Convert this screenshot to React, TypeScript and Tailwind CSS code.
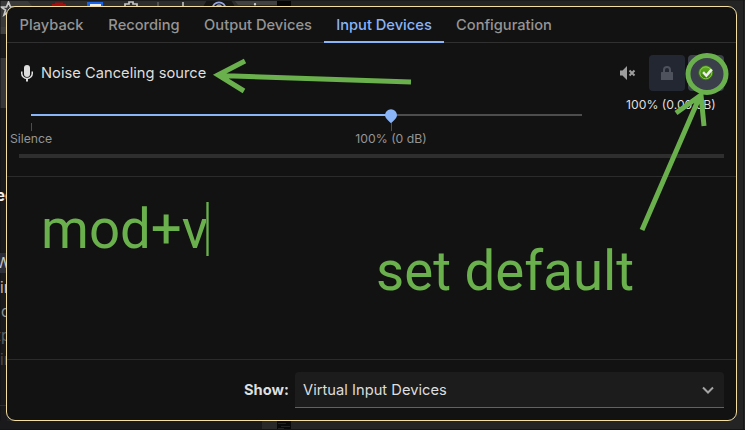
import React from "react";

const tabs = [
  { label: "Playback", width: "w-[89px]" },
  { label: "Recording", width: "w-24" },
  { label: "Output Devices", width: "w-[132px]" },
  { label: "Input Devices", width: "w-[120px]", active: true },
  { label: "Configuration", width: "w-[120px]" },
];

function Desktop() {
  return (
    <svg className="absolute inset-0" width="745" height="430" viewBox="0 0 745 430">
      <rect width="745" height="430" fill="#242424" />
      <rect width="250" height="27" fill="#2d2d2e" />
      <path d="M0 0H27L33 7V27H0Z" fill="#3a3a3a" />
      <rect y="27" width="7" height="7" fill="#414141" />
      <rect y="34" width="7" height="396" fill="#1a1a1d" />
      <rect y="58" width="6" height="50" fill="#37373a" />
      <path d="M8.500 2L10.500 7H16L11.500 10L13 15L8.500 12L4 15L5.500 10L1 7H6.500Z" fill="none" stroke="#c8c8c8" strokeWidth="1.700" />
      <path d="M52 6V4H55V2.500H63V4H66V7H52Z" fill="#ac0b0d" />
      <path d="M87 7V2H103V7Z" fill="#1764e8" />
      <path d="M90 7V4H101V7Z" fill="#e6ebf5" />
      <path d="M125 7V4H129V2H133V4H137V7" fill="none" stroke="#c6c6c6" strokeWidth="1.700" />
      <path d="M158 2V7" stroke="#606060" strokeWidth="1.500" />
      <path d="M183 2V7" stroke="#ccc" strokeWidth="1.500" />
      <path d="M203 7L207 0H231L235 7Z" fill="#151515" />
      <circle cx="219" cy="8.800" r="6.500" fill="none" stroke="#97a5df" strokeWidth="1.700" />
      <path d="M216 7Q219 3 222 7" fill="none" stroke="#9ba6d2" strokeWidth="1.300" />
      <path d="M234 0H277V5H238Z" fill="#414141" />
      <circle cx="255" cy="4.300" r="1.200" fill="#ccc" />
      <rect x="277" width="14" height="6" fill="#050505" />
      <path d="M0 .5H745" stroke="#1c1c1c" />
      <path d="M743.500 0V430" stroke="#171717" strokeWidth="1" />
      <path d="M0 0V430" stroke="#101012" />
      <rect y="253" width="6" height="20" fill="#2b2d38" />
      <rect y="421" width="42" height="9" fill="#1a1a1d" />
      <rect x="42" y="421" width="220" height="9" fill="#1a1a1d" />
      <rect x="262" y="421" width="15" height="9" fill="#292929" />
      <rect x="277" y="421" width="14" height="9" fill="#090909" />
      <path d="M278 423.500H286M281 426.500H290M278 428.500H284" stroke="#222" />
      <path d="M0 429.500H745" stroke="#151515" />
      <path d="M0 405.500H6" stroke="#2c2c2e" />
      <g fontFamily="Inter, 'Liberation Sans', sans-serif" fontSize="15">
        <text x="-4" y="201" fill="#f0f0f0" fontWeight="700">ec</text>
        <text x="-4" y="268" fill="#c5c5ca">W</text>
        <text x="0" y="293" fill="#bcbcbc">in</text>
        <text x="1" y="317" fill="#909090">c</text>
        <text x="-4" y="341" fill="#5c5c5e">tp</text>
        <text x="0" y="365" fill="#4a4a4d">in</text>
      </g>
    </svg>
  );
}

function MicIcon() {
  return (
    <svg width="12" height="17" viewBox="0 0 12 17">
      <rect x="3" y="0" width="6" height="12" rx="3" fill="#dedede" />
      <path d="M.75 6.500V8.500A5.250 5 0 0 0 11.250 8.500V6.500" fill="none" stroke="#dedede" strokeWidth="1.500" />
      <path d="M6 13V16.500" stroke="#dedede" strokeWidth="2" />
    </svg>
  );
}

function MutedIcon() {
  return (
    <svg width="16" height="14" viewBox="0 0 16 14">
      <path d="M0 4.500H2.500L7 0V14L2.500 9.500H0Z" fill="#9d9d9d" />
      <path d="M9.500 4.500L14.500 9.500M14.500 4.500L9.500 9.500" stroke="#9d9d9d" strokeWidth="2" />
    </svg>
  );
}

function LockIcon() {
  return (
    <svg width="12" height="14" viewBox="0 0 12 14">
      <path d="M3 7V4A3 3 0 0 1 9 4V7" fill="none" stroke="#4d525c" strokeWidth="2" />
      <rect y="6" width="12" height="8" rx=".5" fill="#4d525c" />
    </svg>
  );
}

function DefaultIcon() {
  return (
    <svg width="16" height="16" viewBox="0 0 16 16">
      <defs>
        <linearGradient id="badge" x2="0" y2="1">
          <stop stopColor="#65b526" />
          <stop offset="1" stopColor="#347500" />
        </linearGradient>
      </defs>
      <circle cx="7.800" cy="7.800" r="7" fill="url(#badge)" stroke="#397713" />
      <circle cx="7.800" cy="7.800" r="6" fill="none" stroke="#9ad967" strokeWidth=".8" />
      <path d="M4.200 8L6 6.300L8.200 8.700L12.700 3.600L14.800 5.300L8.400 12.600Z" fill="#eeeeec" />
    </svg>
  );
}

function VolumeSlider() {
  return (
    <div className="relative ml-6 mt-[18px] h-10 w-[551px]">
      <div className="mt-[23px] flex h-0.5">
        <div className="w-[360px] bg-[#8ab4f8]" />
        <div className="flex-1 bg-[#4d4d4d]" />
      </div>
      <svg className="absolute -top-[5px] left-[354px]" width="12" height="15" viewBox="0 0 12 15">
        <path d="M6 .2A6 6 0 0 1 12 6.200C12 8.700 10 10.500 6 14.200C2 10.500 0 8.700 0 6.200A6 6 0 0 1 6 .2Z" fill="#8ab4f8" />
      </svg>
      <div className="absolute left-0 top-[9px] h-2 w-px bg-[#4d4d4d]" />
      <div className="absolute left-[360px] top-[9px] h-2 w-px bg-[#4d4d4d]" />
      <span className="absolute left-0 top-[17px] -translate-x-1/2 text-[12.220px] leading-4 text-[#959595]">Silence</span>
      <span className="absolute left-[360px] top-[17px] -translate-x-1/2 text-[12.220px] leading-4 text-[#959595]">100% (0 dB)</span>
    </div>
  );
}

function Annotations() {
  return (
    <>
      <svg className="pointer-events-none absolute inset-0" width="745" height="430" viewBox="0 0 745 430" fill="none" stroke="#6ab04c" strokeWidth="5">
        <path d="M411 82L219 75.500M245 61L218 75L244 91" />
        <ellipse cx="707" cy="74" rx="19" ry="18.500" />
        <path d="M642 230L700 96M676 113L701 95L704 126" />
      </svg>
      <div className="absolute left-[41px] top-[197px] whitespace-nowrap font-[Roboto,sans-serif] text-[54.600px] leading-[64px] text-[#6ab04c]">mod+v</div>
      <div className="absolute left-[206px] top-[202px] h-[54px] w-[3px] bg-[#4c7a38]">
        <div className="mx-auto h-full w-px bg-[#6ab04c]" />
      </div>
      <div className="absolute left-[376px] top-[239px] whitespace-nowrap font-[Roboto,sans-serif] text-[54.600px] leading-[64px] text-[#6ab04c]">set default</div>
    </>
  );
}

export default function App() {
  return (
    <div className="relative h-[430px] w-[745px] overflow-hidden p-1.5 font-[Inter,sans-serif] text-[14.670px]">
      <Desktop />
      <main className="relative flex h-[415px] w-[731px] flex-col overflow-hidden rounded-[9px] border border-[#f5dfa0] bg-[#121212] text-[#dedede]">
        <nav className="flex h-9 shrink-0 border-b border-[#303030]">
          {tabs.map((tab) => (
            <button
              key={tab.label}
              className={`${tab.width} flex h-9 items-center justify-center whitespace-nowrap font-medium ${
                tab.active ? "border-b-2 border-[#8ab4f8] pt-0.5 text-[#8ab4f8]" : "text-[#959595]"
              }`}
            >
              {tab.label}
            </button>
          ))}
        </nav>
        <section className="h-[134px] shrink-0 border-b border-[#2b2b2b]">
          <div className="flex h-12 items-end pl-3.5 pr-3">
            <div className="flex h-9 flex-1 items-center gap-2">
              <MicIcon />
              <span className="tracking-[0.03px]">Noise Canceling source</span>
            </div>
            <div className="flex gap-[3px]">
              <button className="grid h-9 w-9 place-items-center pr-px"><MutedIcon /></button>
              <button className="grid h-9 w-9 place-items-center rounded bg-[#222731]"><LockIcon /></button>
              <button className="grid h-9 w-9 place-items-center rounded bg-[#3a3f4a]"><DefaultIcon /></button>
            </div>
          </div>
          <div className="flex h-[63px]">
            <div className="w-[575px]"><VolumeSlider /></div>
            <span className="ml-11 mt-[5px] whitespace-nowrap text-[12.220px] leading-[18px]">100% (0.00 dB)</span>
          </div>
          <div className="ml-3 h-1 w-[705px] bg-[#2e2e2e]" />
        </section>
        <div className="flex-1" />
        <footer className="flex h-[61px] shrink-0 items-center border-t border-[#2b2b2b] pl-[237px] pr-3">
          <label className="w-[51px] font-bold">Show:</label>
          <button className="flex h-9 flex-1 items-center justify-between rounded-t border-b border-[#626262] bg-[#1c1c1c] px-2">
            <span className="tracking-[0.03px]">Virtual Input Devices</span>
            <svg className="mr-0.5" width="12" height="8" viewBox="0 0 12 8" fill="none" stroke="#a4a4a4" strokeWidth="2">
              <path d="M1 1.500L6 6.500L11 1.500" />
            </svg>
          </button>
        </footer>
      </main>
      <Annotations />
    </div>
  );
}
